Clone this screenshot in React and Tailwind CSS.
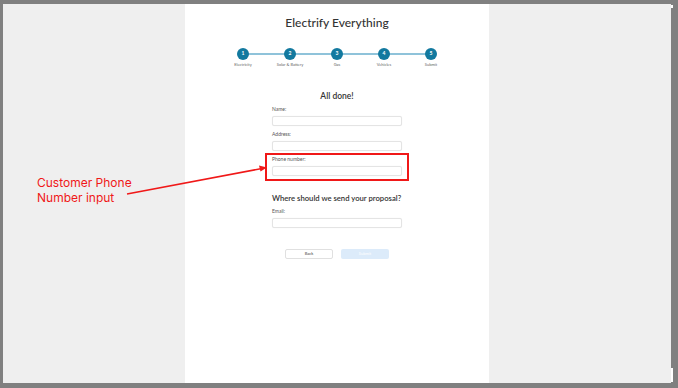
import React from "react";

const steps = ["Electricity", "Solar & Battery", "Gas", "Vehicles", "Submit"];

function Field({ label, first }) {
  return (
    <div>
      <div className={`${first ? "mt-[4px]" : "mt-[5px]"} text-[5px] leading-[6px] text-[#555]`}>
        {label}
      </div>
      <div className="mt-[4px] h-[10px] rounded-[2px] border border-[#e4e4e4] bg-white shadow-[0_0_1px_rgba(0,0,0,0.08)]" />
    </div>
  );
}

export default function App() {
  return (
    <div
      className="relative h-[388px] w-[678px] overflow-hidden bg-[#808080] pt-[4px] pl-[3px] pr-[7px] pb-[5px]"
      style={{ fontFamily: "Lato, 'Noto Sans', sans-serif" }}
    >
      <div className="flex h-full bg-[#efefef]">
        <div className="w-[182px]" />
        {/* Form page */}
        <div className="w-[304px] bg-white pt-[10px] text-[#333]">
          <h1 className="text-center text-[12px] leading-[18px] font-medium">Electrify Everything</h1>

          {/* Stepper */}
          <div className="relative mx-auto mt-[16px] flex w-[235px]">
            <div className="absolute left-[23px] right-[23px] top-[5px] h-[1.5px] bg-[#8fc3da]" />
            {steps.map((s, i) => (
              <div key={s} className="relative flex w-[47px] flex-col items-center">
                <div className="flex h-[12px] w-[12px] items-center justify-center rounded-full bg-[#12799f] text-[5px] font-bold text-white">
                  {i + 1}
                </div>
                <div className="mt-[2px] text-[4px] leading-[5px] text-[#666]">{s}</div>
              </div>
            ))}
          </div>

          {/* Fields */}
          <div className="mx-auto w-[130px]">
            <h2 className="mt-[23px] text-center text-[8.5px] leading-[12px] font-semibold">All done!</h2>
            <Field label="Name:" first />
            <Field label="Address:" />
            <Field label="Phone number:" />
            <h2 className="mt-[17px] text-[7.7px] leading-[10px] font-semibold whitespace-nowrap">
              Where should we send your proposal?
            </h2>
            <Field label="Email:" />
          </div>

          <div className="mt-[21px] flex justify-center gap-[8px]">
            <button className="h-[10px] w-[48px] rounded-[2px] border border-[#e0e0e0] bg-white text-[4px] leading-none text-[#444]">
              Back
            </button>
            <button className="h-[10px] w-[48px] rounded-[2px] bg-[#dcebfa] text-[4px] leading-none text-white">
              Submit
            </button>
          </div>
        </div>
        <div className="flex-1" />
      </div>

      {/* Annotation */}
      <div
        className="absolute left-[37px] top-[175px] text-[12px] leading-[15px] text-[#f01818]"
        style={{ fontFamily: "Inter, 'Liberation Sans', sans-serif" }}
      >
        Customer Phone
        <br />
        Number input
      </div>
      <div className="absolute left-[265px] top-[153px] h-[28px] w-[144px] border-2 border-[#f01818]" />
      <svg className="absolute left-0 top-0" width="678" height="388">
        <line x1="127" y1="194" x2="262" y2="168.5" stroke="#f01818" strokeWidth="1.6" />
        <polygon points="267,167.5 259,165.5 260.5,171.5" fill="#f01818" />
      </svg>
      <div className="absolute left-[671px] top-[5px] h-[3px] w-[2px] bg-white" />
      <div className="absolute left-[671px] top-[368px] h-[14px] w-[2px] bg-white" />
    </div>
  );
}
